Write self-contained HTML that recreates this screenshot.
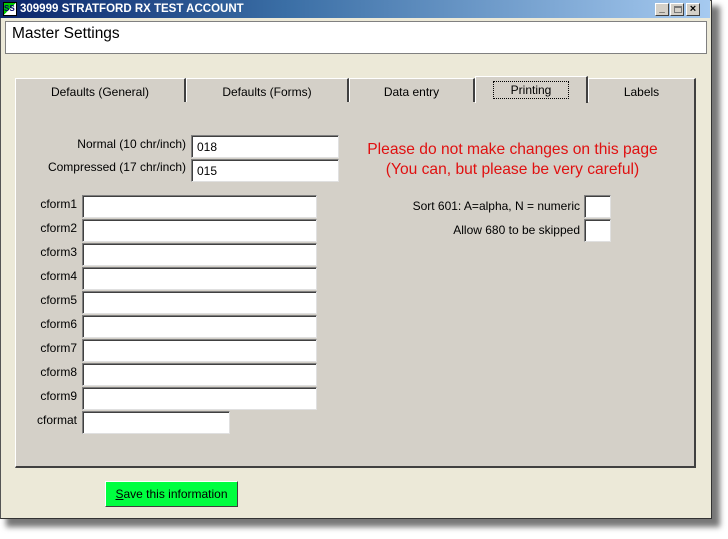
<!DOCTYPE html>
<html><head><style>
*{margin:0;padding:0;box-sizing:border-box}
body{width:728px;height:539px;background:#fff;position:relative;overflow:hidden;font-family:"Liberation Sans",sans-serif;font-size:12px;color:#000}
.a{position:absolute}
.shadow{left:6px;top:6px;width:714px;height:521px;background:#777;filter:blur(3px)}
.win{left:0;top:0;width:712px;height:519px;background:#ece9d8;border:1px solid #555;border-right-color:#333;border-bottom-color:#333}
.title{left:0;top:0;width:710px;height:18px;background:linear-gradient(to right,#0a246a,#3a6ea5 40%,#a6caf0);color:#fff;font-weight:bold;font-size:11.5px;line-height:19px}
.inp{background:#fff;border:1px solid;border-color:#808080 #e0e0e0 #e0e0e0 #808080;box-shadow:inset 1px 1px 0 #404040;font-size:12px;padding:4px 0 0 5px}
.lbl{font-size:12px;text-align:right}
.tab{top:78px;height:24px;background:#d4d0c8;border-top:1px solid #fff;border-left:1px solid #fff;border-right:2px solid #404040;text-align:center;line-height:26px;font-size:12px}
.btn{border:1px solid #fff;border-right-color:#404040;border-bottom-color:#404040}
</style></head><body>
<div class="a shadow"></div>
<div class="a win"></div>
<div class="a title"><span class="a" style="left:3px;top:2px;width:14px;height:14px;background:linear-gradient(135deg,#0c0 50%,#fff 50%);border:1px solid #000;font-size:8px;line-height:12px;color:#006">SS</span><span class="a" style="left:20px;top:0">309999 STRATFORD RX TEST ACCOUNT</span>
<span class="a btn" style="left:655px;top:3px;width:14px;height:13px;background:#d4d0c8;color:#000;font-size:10px;line-height:10px;text-align:center">_</span>
<span class="a btn" style="left:670px;top:3px;width:14px;height:13px;background:#d4d0c8"><span class="a" style="left:3px;top:2px;width:8px;height:7px;border:1px solid #777;border-top-width:2px"></span></span>
<span class="a btn" style="left:686px;top:3px;width:14px;height:13px;background:#d4d0c8;color:#000;font-size:11px;line-height:11px;text-align:center">×</span>
</div>
<div class="a" style="left:5px;top:21px;width:702px;height:33px;background:#fff;border:1px solid #808080;font-size:15.5px;padding:3px 6px">Master Settings</div>

<div class="a" style="left:15px;top:102px;width:681px;height:366px;background:#d4d0c8;border-left:1px solid #fff;border-right:2px solid #404040;border-bottom:2px solid #404040"></div>
<div class="a tab" style="left:15px;width:171px">Defaults (General)</div>
<div class="a tab" style="left:186px;width:163px">Defaults (Forms)</div>
<div class="a tab" style="left:349px;width:126px">Data entry</div>
<div class="a tab" style="left:475px;top:76px;height:27px;width:113px;border-bottom:none;line-height:26px"><span style="border:1px dotted #000;padding:1px 17px">Printing</span></div>
<div class="a tab" style="left:588px;width:108px">Labels</div>

<div class="a lbl" style="left:30px;top:137px;width:156px">Normal (10 chr/inch)</div>
<div class="a inp" style="left:191px;top:135px;width:148px;height:23px">018</div>
<div class="a lbl" style="left:30px;top:160px;width:156px">Compressed (17 chr/inch)</div>
<div class="a inp" style="left:191px;top:159px;width:148px;height:23px">015</div>

<div class="a" style="left:345px;top:140px;width:335px;text-align:center;color:#e01010;font-size:15.6px;line-height:20px">Please do not make changes on this page<br>(You can, but please be very careful)</div>

<div class="a lbl" style="left:380px;top:199px;width:200px">Sort 601: A=alpha, N = numeric</div>
<div class="a inp" style="left:584px;top:195px;width:27px;height:23px"></div>
<div class="a lbl" style="left:380px;top:223px;width:200px">Allow 680 to be skipped</div>
<div class="a inp" style="left:584px;top:219px;width:27px;height:23px"></div>

<div class="a lbl" style="left:20px;top:197px;width:57px">cform1</div><div class="a inp" style="left:82px;top:195px;width:235px;height:23px"></div>
<div class="a lbl" style="left:20px;top:221px;width:57px">cform2</div><div class="a inp" style="left:82px;top:219px;width:235px;height:23px"></div>
<div class="a lbl" style="left:20px;top:245px;width:57px">cform3</div><div class="a inp" style="left:82px;top:243px;width:235px;height:23px"></div>
<div class="a lbl" style="left:20px;top:269px;width:57px">cform4</div><div class="a inp" style="left:82px;top:267px;width:235px;height:23px"></div>
<div class="a lbl" style="left:20px;top:293px;width:57px">cform5</div><div class="a inp" style="left:82px;top:291px;width:235px;height:23px"></div>
<div class="a lbl" style="left:20px;top:317px;width:57px">cform6</div><div class="a inp" style="left:82px;top:315px;width:235px;height:23px"></div>
<div class="a lbl" style="left:20px;top:341px;width:57px">cform7</div><div class="a inp" style="left:82px;top:339px;width:235px;height:23px"></div>
<div class="a lbl" style="left:20px;top:365px;width:57px">cform8</div><div class="a inp" style="left:82px;top:363px;width:235px;height:23px"></div>
<div class="a lbl" style="left:20px;top:389px;width:57px">cform9</div><div class="a inp" style="left:82px;top:387px;width:235px;height:23px"></div>
<div class="a lbl" style="left:20px;top:413px;width:57px">cformat</div><div class="a inp" style="left:82px;top:411px;width:148px;height:23px"></div>

<div class="a btn" style="left:105px;top:481px;width:133px;height:26px;background:#00ff40;text-align:center;line-height:24px;font-size:12px"><u>S</u>ave this information</div>
</body></html>
